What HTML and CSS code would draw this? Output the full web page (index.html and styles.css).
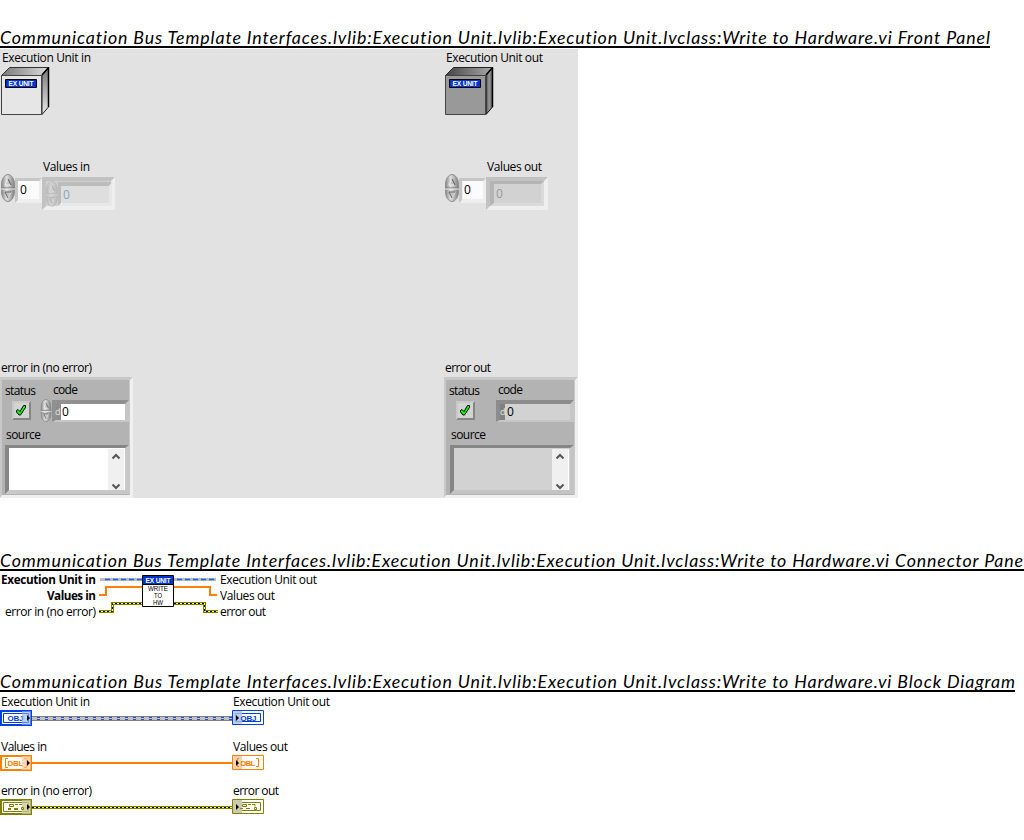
FILE: index.html
```html
<!DOCTYPE html>
<html lang="en">
<head>
<meta charset="utf-8">
<title>Write to Hardware.vi</title>
<link rel="stylesheet" href="styles.css">
</head>
<body>
<svg class="defs" width="0" height="0">
  <defs>
    <linearGradient id="steel" x1="0" x2="1" y1="0" y2="0"><stop offset="0" stop-color="#888"/><stop offset=".4" stop-color="#e0e0e0"/><stop offset="1" stop-color="#808080"/></linearGradient>
    <linearGradient id="lid" x1="0" x2="1"><stop offset="0" stop-color="#777"/><stop offset="1" stop-color="#ddd"/></linearGradient>
    <linearGradient id="side" x1="0" x2="0" y1="0" y2="1"><stop offset="0" stop-color="#777"/><stop offset="1" stop-color="#e8e8e8"/></linearGradient>
    <linearGradient id="lidDark" x1="0" x2="1"><stop offset="0" stop-color="#444"/><stop offset="1" stop-color="#aaa"/></linearGradient>
    <linearGradient id="sideDark" x1="0" x2="1"><stop offset="0" stop-color="#555"/><stop offset=".5" stop-color="#999"/><stop offset="1" stop-color="#555"/></linearGradient>
    <symbol id="spinner" viewBox="0 0 14 28" preserveAspectRatio="none">
      <rect x=".5" y=".5" width="13" height="27" rx="6.5" ry="10" fill="url(#steel)" stroke="#8c8c8c"/>
      <path d="M0 14h14" stroke="#777"/><path d="M0 15h14" stroke="#eee"/>
      <path d="M7 5L4 11h6" fill="#c4c4c4" stroke="#eee"/><path d="M7 5l3 6" stroke="#555"/>
      <path d="M10 18L7 24" stroke="#eee"/><path d="M10 18H4l3 6" fill="#c4c4c4" stroke="#666"/>
    </symbol>
    <symbol id="led" viewBox="0 0 19 19">
      <path d="M0 0h19v19H0z" fill="#c9c9c9"/><path d="M19 0v19H0l2-2h15V2z" fill="#858585"/>
      <path d="M2 2h15v15H2z" fill="#d3d3d3"/>
      <path d="M4.500 9.500l1.500-1 2 2 3.500-6h2v2l-5 7.500H7l-2.500-3z" fill="#0f0" stroke="#000" stroke-width="1"/>
    </symbol>
    <symbol id="chevrons" viewBox="0 0 16 41">
      <path d="M0 0h16v41H0z" fill="#f0f0f0"/>
      <path d="M4.500 9.500L8 6l3.500 3.500M4.500 35.500L8 39l3.500-3.500" fill="none" stroke="#555" stroke-width="2"/>
    </symbol>
  </defs>
</svg>

<section class="front">
  <h1><svg class="title" width="1024" height="29"><text x="0" y="24" textLength="990">Communication Bus Template Interfaces.lvlib:Execution Unit.lvlib:Execution Unit.lvclass:Write to Hardware.vi Front Panel</text><path class="rule" d="M0 27H990"/></svg></h1>
  <div class="panel">
    <svg width="134" height="106">
      <text x="2" y="13" textLength="89">Execution Unit in</text>
      <path d="M1.500 26.500L9.500 18.500H48.500L42 26.500z" fill="url(#lid)" stroke="#333"/>
      <path d="M42 26.500L48.500 18.500V58L42 65.500z" fill="url(#side)" stroke="#222"/>
      <path d="M48.500 18V58M42 26L48.500 18.500" stroke="#000" stroke-width="1.500"/>
      <path d="M1.500 26.500h40v39h-40z" fill="#e6e6e6" stroke="#444"/>
      <path d="M5.500 30.500h31v8h-31z" fill="#0033cc" stroke="#000"/>
      <text class="pix white" x="8.500" y="37" textLength="25">EX UNIT</text>
    </svg>
    <svg width="134" height="106">
      <text x="2" y="13" textLength="97">Execution Unit out</text>
      <path d="M1.500 26.500L9.500 18.500H48.500L42 26.500z" fill="url(#lidDark)" stroke="#222"/>
      <path d="M42 26.500L48.500 18.500V58L42 65.500z" fill="url(#sideDark)" stroke="#111"/>
      <path d="M48.500 18V58M42 26L48.500 18.500" stroke="#000" stroke-width="1.500"/>
      <path d="M1.500 26.500h40v39h-40z" fill="#999" stroke="#444"/>
      <path d="M5.500 30.500h31v8h-31z" fill="#0033cc" stroke="#000"/>
      <text class="pix white" x="8.500" y="37" textLength="25">EX UNIT</text>
    </svg>

    <svg width="134" height="200">
      <text x="43" y="16" textLength="47">Values in</text>
      <path d="M15 23h27v25H15z" fill="#eee"/><path d="M15 23h27l-3 3H18v19l-3 3z" fill="#c6c6c6"/>
      <path d="M18 26h21v18H18z" fill="#fbfbfb"/>
      <use href="#spinner" x="1" y="19" width="14" height="28"/>
      <text x="20" y="39">0</text>
      <path d="M42 22h73v33H42z" fill="#efefef"/><path d="M42 22h73l-4 4H46v25l-4 4z" fill="#c2c2c2"/>
      <path d="M46 26h65v25H46z" fill="#d0d0d0"/><path d="M58 27h54l-3 4H61v17l-3 3z" fill="#bcbcbc"/>
      <path d="M58 51l3-3h48V31l3-4v24z" fill="#e8e8e8"/>
      <path d="M61 31h48v17H61z" fill="#dedede"/>
      <use href="#spinner" x="46" y="26" width="12" height="26" opacity=".3"/>
      <text class="off blue" x="63" y="44">0</text>
    </svg>
    <svg width="134" height="200">
      <text x="43" y="16" textLength="55">Values out</text>
      <path d="M15 23h27v25H15z" fill="#eee"/><path d="M15 23h27l-3 3H18v19l-3 3z" fill="#c6c6c6"/>
      <path d="M19 26h20v18H19z" fill="#fbfbfb"/>
      <use href="#spinner" x="1" y="19" width="14" height="28"/>
      <text x="20" y="39">0</text>
      <path d="M42 22h62v33H42z" fill="#efefef"/><path d="M42 22h62l-4 4H46v25l-4 4z" fill="#c2c2c2"/>
      <path d="M46 26h54v25H46z" fill="#dadada"/><path d="M46 26h54l-3 3H50v19l-4 3z" fill="#b4b4b4"/>
      <path d="M50 29h47v19H50z" fill="#d2d2d2"/>
      <text class="off" x="52" y="43">0</text>
    </svg>

    <svg width="134" height="143">
      <text x="1" y="17" textLength="91">error in (no error)</text>
      <path d="M0 22h133v121H0z" fill="#f0f0f0"/><path d="M0 22h133l-3 3v115H2l-2 3z" fill="#c8c8c8"/>
      <path d="M2 25h127v115H2z" fill="#b3b3b3"/>
      <text x="5" y="40" textLength="31">status</text><text x="53" y="39" textLength="25">code</text><text x="6" y="84" textLength="35">source</text>
      <use href="#led" x="12" y="46" width="19" height="19"/>
      <path d="M52 45h77v22H52z" fill="#c6c6c6"/><path d="M52 45h77l-4 4H56v16l-4 2z" fill="#909090"/>
      <path d="M56 49h5v16h-5z" fill="#8d8d8d"/><path d="M61 49h64v16H61z" fill="#fff"/>
      <use href="#spinner" x="40.500" y="44" width="11" height="23"/>
      <text class="radix" x="55" y="60">d</text><text x="62" y="61">0</text>
      <path d="M5 90h124v49H5z" fill="#c8c8c8"/><path d="M5 90h124l-4 3H9v42l-4 4z" fill="#868686"/>
      <path d="M9 93h116v42H9z" fill="#fff"/>
      <use href="#chevrons" x="108" y="94" width="16" height="41"/>
    </svg>
    <svg width="134" height="143">
      <text x="1" y="17" textLength="46">error out</text>
      <path d="M0 22h134v121H0z" fill="#f0f0f0"/><path d="M0 22h134l-3 3v115H2l-2 3z" fill="#c8c8c8"/>
      <path d="M2 25h128v115H2z" fill="#b3b3b3"/>
      <text x="5" y="40" textLength="31">status</text><text x="54" y="39" textLength="25">code</text><text x="7" y="84" textLength="35">source</text>
      <use href="#led" x="12" y="46" width="19" height="19"/>
      <path d="M52 45h78v22H52z" fill="#c6c6c6"/><path d="M52 45h78l-4 4H56v16l-4 2z" fill="#8c8c8c"/>
      <path d="M56 49h5v16h-5z" fill="#808080"/><path d="M61 49h65v16H61z" fill="#d2d2d2"/>
      <text class="radix" x="56" y="60">d</text><text x="63" y="61">0</text>
      <path d="M6 90h124v49H6z" fill="#c4c4c4"/><path d="M6 90h124l-4 3H10v42l-4 4z" fill="#868686"/>
      <path d="M10 93h116v42H10z" fill="#d2d2d2"/><path d="M124 94h1v41h-1z" fill="#fff"/>
      <use href="#chevrons" x="108" y="94" width="16" height="41"/>
    </svg>
  </div>
</section>

<section class="connector">
  <h1><svg class="title" width="1024" height="29"><text x="0" y="24" textLength="1023">Communication Bus Template Interfaces.lvlib:Execution Unit.lvlib:Execution Unit.lvclass:Write to Hardware.vi Connector Pane</text><path class="rule" d="M0 27H1024"/></svg></h1>
  <svg width="340" height="52">
    <text class="bold" x="1" y="12" textLength="95">Execution Unit in</text>
    <text class="bold" x="47" y="28" textLength="49">Values in</text>
    <text x="5" y="44" textLength="91">error in (no error)</text>
    <path d="M100 7.500H142M174 7.500H216" stroke="#bbb" stroke-width="3"/>
    <path d="M105 7.500H142M177 7.500H216" stroke="#1a5cff" stroke-width="1.600" stroke-dasharray="5 3"/>
    <path class="array" d="M99 23H106V15H142M174 15H210V23H217"/>
    <path class="err" d="M99 39.500H112.500V31.500H142M174 31.500H204.500V39.500H218"/>
    <path class="err-core" d="M99 39.500H112.500V31.500H142M174 31.500H204.500V39.500H218"/>
    <path class="err-dash" d="M99 39.500H112.500V31.500H142M174 31.500H204.500V39.500H218"/>
    <path d="M142.500 3.500h31v31h-31z" fill="#fff" stroke="#000"/><path d="M143 4h30v8h-30z" fill="#0033cc"/><path d="M143 12.500h30" stroke="#000"/>
    <text class="pix white" x="145.500" y="10.500" textLength="25">EX UNIT</text>
    <text class="pix thin" x="148" y="19" textLength="20" lengthAdjust="spacingAndGlyphs">WRITE</text>
    <text class="pix thin" x="154" y="26" textLength="8" lengthAdjust="spacingAndGlyphs">TO</text>
    <text class="pix thin" x="153" y="33" textLength="10" lengthAdjust="spacingAndGlyphs">HW</text>
    <text x="220" y="12" textLength="97">Execution Unit out</text>
    <text x="220" y="28" textLength="55">Values out</text>
    <text x="220" y="44" textLength="46">error out</text>
  </svg>
</section>

<section class="diagram">
  <h1><svg class="title" width="1024" height="29"><text x="0" y="24" textLength="1015">Communication Bus Template Interfaces.lvlib:Execution Unit.lvlib:Execution Unit.lvclass:Write to Hardware.vi Block Diagram</text><path class="rule" d="M0 27H1015"/></svg></h1>
  <svg width="340" height="45">
    <text x="1" y="13" textLength="89">Execution Unit in</text><text x="233" y="13" textLength="97">Execution Unit out</text>
    <path d="M32 25.500H232" stroke="#808080" stroke-width="5"/><path d="M32 25.500H232" stroke="#c0c0c0" stroke-width="3"/>
    <path d="M37 24.500H232M37 26.500H232" stroke="#1a50e0" stroke-dasharray="3 5"/>
    <path d="M1 18h30v14H1z" fill="#fff" stroke="#0040dd" stroke-width="2"/><path d="M3.500 20.500h25v9h-25z" fill="#fff" stroke="#0040dd"/>
    <text class="pix obj" x="7.500" y="28" textLength="16">OBJ</text>
    <path d="M22 18h9v14h-9z" fill="#8fb0fa" opacity=".6"/><path d="M27 22v6l3-3z"/>
    <path d="M232.500 17.500h31v14h-31z" fill="#fff" stroke="#0040dd"/><path d="M235.500 20.500h25v8h-25z" fill="none" stroke="#0040dd"/>
    <path d="M233 18h9v13h-9z" fill="#aebfec" opacity=".8"/><text class="pix obj" x="240.500" y="27.500" textLength="16">OBJ</text><path d="M236 22v6l3-3z"/>
  </svg>
  <svg width="340" height="45">
    <text x="1" y="13" textLength="46">Values in</text><text x="233" y="13" textLength="55">Values out</text>
    <path class="array" d="M32 25H232"/>
    <path d="M1 18h30v14H1z" fill="#fff" stroke="#ff8000" stroke-width="2"/><path d="M8 20.500H5.500v9H8M24 20.500h2.500v9H24" fill="none" stroke="#ff8000"/>
    <text class="pix dbl" x="7.500" y="28" textLength="16">DBL</text>
    <path d="M22 18h9v14h-9z" fill="#ffc898" opacity=".7"/><path d="M27 22v6l3-3z"/>
    <path d="M232.500 17.500h31v14h-31z" fill="#fff" stroke="#ff8000"/><path d="M233 18h9v13h-9z" fill="#f3d3b7"/><path d="M239 20.500h-1.500v8h1.500M256 20.500h2.500v8H256" fill="none" stroke="#ff8000"/>
    <text class="pix dbl" x="240.500" y="27.500" textLength="15">DBL</text><path d="M236 22v6l3-3z"/>
  </svg>
  <svg width="340" height="45">
    <text x="1" y="12" textLength="91">error in (no error)</text><text x="233" y="12" textLength="46">error out</text>
    <path class="err" d="M32 24.500H232"/><path class="err-core" d="M32 24.500H232"/><path class="err-dash" d="M32 24.500H232"/>
    <path d="M1 17h30v14H1z" fill="#fff" stroke="#808000" stroke-width="2"/><path d="M3.500 19.500h25v9h-25z" fill="#fff" stroke="#808000"/>
    <path d="M9.500 21.500h4v2h-4zM15 21.500h3M19 21.500h3M8 25.500h3M8 26.500h3M14 25.500h4M14 26.500h4" fill="none" stroke="#808000"/>
    <path d="M22 17h9v14h-9z" fill="#c6c693" opacity=".75"/><path d="M21.500 24.500h2v2h-2z" fill="none" stroke="#808000"/><path d="M27 21v6l3-3z"/>
    <path d="M232.500 16.500h31v14h-31z" fill="#fff" stroke="#808000"/><path d="M235.500 19.500h25v8h-25z" fill="none" stroke="#808000"/>
    <path d="M233 17h9v13h-9z" fill="#ccccad"/><path d="M242.500 21.500h4v2h-4zM248 21.500h3M252 21.500h3v2M240 25.500h3M246 25.500h4M254.500 24.500h2v2h-2z" fill="none" stroke="#808000"/><path d="M236 21v6l3-3z"/>
  </svg>
</section>
</body>
</html>
```
FILE: styles.css
```css
body { margin: 0; background: #fff; overflow-x: hidden; }
svg { display: block; }
.defs { height: 0; }
h1 { margin: 0; font-size: 12px; font-weight: normal; }
text { font: 12px "Open Sans", "Noto Sans", sans-serif; fill: #000; white-space: pre; font-variant-ligatures: none; }
.title text { font: italic 17.8px Lato, "Open Sans", sans-serif; font-variant-ligatures: none; }
.rule { stroke: #000; stroke-width: 2; }
.front { padding-top: 20px; }
.panel { display: grid; grid-template-columns: 444px 134px; width: 578px; height: 449px; background: #e2e2e2; }
.connector { padding-top: 45px; }
.diagram { padding-top: 40px; }
text.bold { font-weight: 700; font-size: 11.7px; }
text.off { fill: #999; }
text.blue { fill: #8aa4ba; }
text.radix { fill: #e4e4e4; font-size: 9px; }
text.pix { font: bold 6.6px "Liberation Sans", sans-serif; }
text.thin { font-weight: normal; font-size: 7px; }
text.white { fill: #fff; }
text.obj { fill: #0040dd; font-size: 8px; }
text.dbl { fill: #ff8000; font-size: 8px; }
.array { fill: none; stroke: #ff8000; stroke-width: 2; }
.err { fill: none; stroke: #808000; stroke-width: 3; }
.err-core { fill: none; stroke: #ffff40; stroke-width: 1; }
.err-dash { fill: none; stroke: #000; stroke-width: 1; stroke-dasharray: 2 2; }
```
